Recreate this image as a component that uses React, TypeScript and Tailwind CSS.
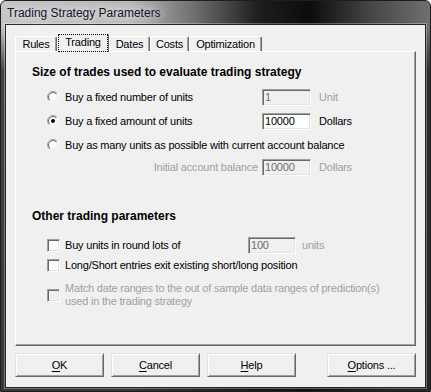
const sunken =
  'border border-t-[#a0a0a0] border-l-[#a0a0a0] border-r-white border-b-white shadow-[inset_1px_1px_0_#696969,inset_-1px_-1px_0_#e3e3e3]';

function Radio({ checked }: { checked?: boolean }) {
  return (
    <svg width="12" height="12" viewBox="0 0 12 12" className="shrink-0">
      <defs>
        <linearGradient id="rg-outer" x1="0" y1="0" x2="1" y2="1">
          <stop offset="0.5" stopColor="#a0a0a0" />
          <stop offset="0.5" stopColor="#ffffff" />
        </linearGradient>
        <linearGradient id="rg-inner" x1="0" y1="0" x2="1" y2="1">
          <stop offset="0.5" stopColor="#696969" />
          <stop offset="0.5" stopColor="#e3e3e3" />
        </linearGradient>
      </defs>
      <circle cx="6" cy="6" r="5.5" fill="none" stroke="url(#rg-outer)" />
      <circle cx="6" cy="6" r="4.5" fill="#fff" stroke="url(#rg-inner)" />
      {checked && <circle cx="6" cy="6" r="2" fill="#000" />}
    </svg>
  );
}

function Check({ disabled }: { disabled?: boolean }) {
  return (
    <span
      className={`block w-[13px] h-[13px] shrink-0 ${sunken} ${disabled ? 'bg-[#f0f0f0]' : 'bg-white'}`}
    />
  );
}

function NumBox({ value, disabled, w = 49 }: { value: string; disabled?: boolean; w?: number }) {
  return (
    <div
      className={`h-[17px] pl-[2px] flex items-center leading-none ${sunken} ${
        disabled ? 'bg-[#f0f0f0] text-[#6d6d6d]' : 'bg-white text-black'
      } ${w === 49 ? 'w-[49px]' : 'w-[48px]'}`}
    >
      {value}
    </div>
  );
}

function Tab({ label, w, selected }: { label: string; w: string; selected?: boolean }) {
  if (selected) {
    return (
      <div
        className={`${w} h-[19px] mb-[-1px] relative z-10 bg-[#f0f0f0] border-t border-l border-white border-r border-r-[#696969] rounded-t-[2px] flex items-center justify-center pb-[2px]`}
      >
        <span className="absolute inset-0 border border-dotted border-black" />
        {label}
      </div>
    );
  }
  return (
    <div
      className={`${w} h-[15px] bg-[#f0f0f0] border-t border-l border-white border-r border-r-[#696969] shadow-[inset_-1px_0_0_#a0a0a0] rounded-t-[2px] flex items-center justify-center`}
    >
      {label}
    </div>
  );
}

function Btn({ first, rest, className = '' }: { first: string; rest: string; className?: string }) {
  return (
    <button
      type="button"
      className={`w-[89px] h-[24px] bg-[#f0f0f0] border border-t-[#e3e3e3] border-l-[#e3e3e3] border-r-[#696969] border-b-[#696969] shadow-[inset_1px_1px_0_#fff,inset_-1px_-1px_0_#a0a0a0] text-black ${className}`}
    >
      <u className="underline-offset-[2px]">{first}</u>
      {rest}
    </button>
  );
}

export default function App() {
  return (
    <div className="w-[431px] h-[392px] rounded-t-[6px] border border-[#1e1e1e] bg-[linear-gradient(180deg,rgba(0,0,0,0)_0px,rgba(0,0,0,0)_26px,rgba(25,25,25,0.75)_70px,rgba(20,20,20,0.8)_100%),linear-gradient(90deg,#c4c4c4_0%,#b8b8b8_30%,#6a6a6a_46%,#1e1e1e_60%,#0c0c0c_72%,#454545_86%,#707070_100%)] font-['Liberation_Sans',Arial,sans-serif] text-[11px] text-black overflow-hidden">
      <div className="h-[23px] pl-[6px] flex items-center">
        <span className="text-[12px] text-[#14142e] [text-shadow:0_0_8px_rgba(255,255,255,0.95),0_0_14px_rgba(255,255,255,0.8)]">
          Trading Strategy Parameters
        </span>
      </div>

      <div className="ml-[4px] w-[421px] h-[364px] border border-[#262626] bg-[#f0f0f0] pt-[8px] pl-[9px] tracking-[-0.2px] shadow-[0_0_0_1px_rgba(255,255,255,0.3)]">
        <div className="h-[18px] flex items-end">
          <Tab label="Rules" w="w-[42px]" />
          <Tab label="Trading" w="w-[52px]" selected />
          <Tab label="Dates" w="w-[41px]" />
          <Tab label="Costs" w="w-[39px]" />
          <Tab label="Optimization" w="w-[73px]" />
        </div>

        <div className="w-[401px] h-[295px] border-t border-l border-white border-r border-b border-r-[#696969] border-b-[#696969] shadow-[inset_-1px_-1px_0_#a0a0a0] pt-[13px]">
          <p className="pl-[16px] text-[12px] font-bold leading-[14px] tracking-normal">
            Size of trades used to evaluate trading strategy
          </p>

          <div className="mt-[6px] pl-[31px]">
            <div className="h-[24px] flex items-center">
              <div className="w-[215px] flex items-center gap-[6px]">
                <Radio />
                <span>Buy a fixed number of units</span>
              </div>
              <NumBox value="1" disabled />
              <span className="ml-[8px] text-[#a0a0a0]">Unit</span>
            </div>
            <div className="h-[24px] flex items-center">
              <div className="w-[215px] flex items-center gap-[6px]">
                <Radio checked />
                <span>Buy a fixed amount of units</span>
              </div>
              <NumBox value="10000" />
              <span className="ml-[8px]">Dollars</span>
            </div>
            <div className="h-[24px] flex items-center gap-[6px]">
              <Radio />
              <span>Buy as many units as possible with current account balance</span>
            </div>
            <div className="h-[21px] flex items-center">
              <span className="w-[215px] pr-[4px] text-right text-[#a0a0a0]">Initial account balance</span>
              <NumBox value="10000" disabled />
              <span className="ml-[8px] text-[#a0a0a0]">Dollars</span>
            </div>
          </div>

          <p className="mt-[31px] pl-[16px] text-[12px] font-bold leading-[14px] tracking-normal">
            Other trading parameters
          </p>

          <div className="mt-[12px] pl-[31px]">
            <div className="h-[20px] flex items-center">
              <div className="w-[201px] flex items-center gap-[5px]">
                <Check />
                <span>Buy units in round lots of</span>
              </div>
              <div className="h-[18px] flex items-center">
                <NumBox value="100" disabled w={48} />
              </div>
              <span className="ml-[6px] text-[#a0a0a0]">units</span>
            </div>
            <div className="h-[20px] flex items-center gap-[5px]">
              <Check />
              <span>Long/Short entries exit existing short/long position</span>
            </div>
            <div className="mt-[7px] flex items-center gap-[5px]">
              <Check disabled />
              <span className="leading-[13px] text-[#a0a0a0]">
                Match date ranges to the out of sample data ranges of prediction(s)
                <br />
                used in the trading strategy
              </span>
            </div>
          </div>
        </div>

        <div className="mt-[7px] w-[401px] flex gap-[7px]">
          <Btn first="O" rest="K" />
          <Btn first="C" rest="ancel" />
          <Btn first="H" rest="elp" />
          <Btn first="O" rest="ptions ..." className="ml-auto" />
        </div>
      </div>
    </div>
  );
}
